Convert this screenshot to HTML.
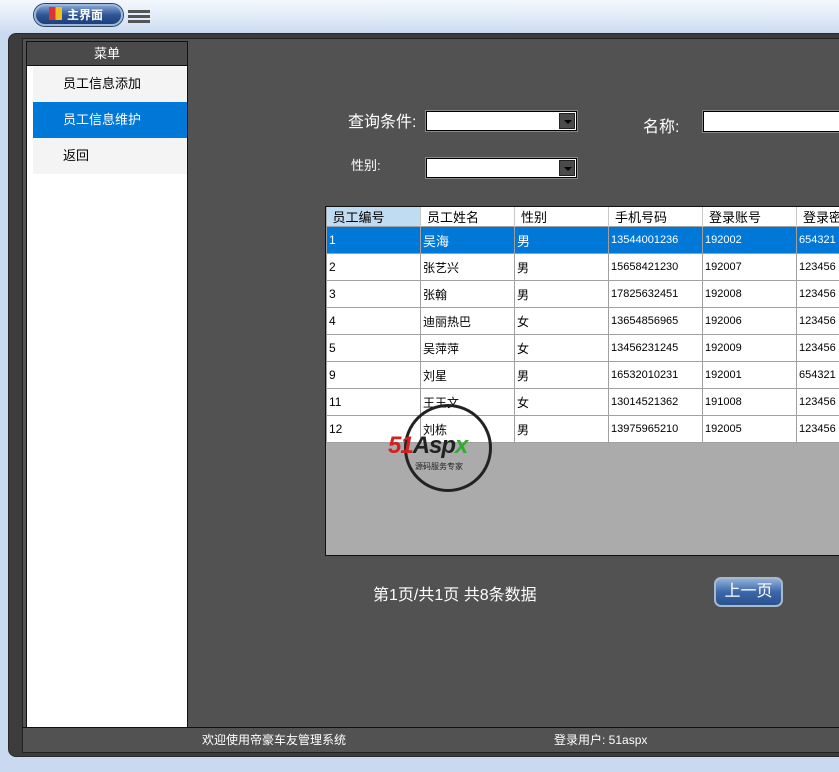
<!DOCTYPE html>
<html><head><meta charset="utf-8"><style>
*{margin:0;padding:0;box-sizing:border-box}
body{width:839px;height:772px;overflow:hidden;position:relative;background:#c9d9ef;font-family:"Liberation Sans","Noto Sans CJK SC","WenQuanYi Zen Hei",sans-serif;font-size:12px}
.abs{position:absolute}
.top{left:0;top:0;width:839px;height:34px;background:linear-gradient(#f4f8fd,#dde8f7 60%,#c9d9ef)}
.frame{left:8px;top:33px;width:840px;height:724px;background:#3c3c3c;border-radius:8px;border:1px solid #2a2a2a}
.inner{left:22px;top:38px;width:830px;height:715px;background:#525252;border:1px solid #222}
.side{left:26px;top:41px;width:162px;height:687px;background:#fff;border:1px solid #111}
.item{position:absolute;left:6px;width:154px;height:36px;line-height:36px;padding-left:30px;font-size:13px;background:#f4f4f4;color:#000}
.w{color:#fff}
.combo{background:#fff;border:1px solid #000;outline:1px solid #888;height:20px}
.combo i{position:absolute;right:1px;top:1px;width:16px;height:16px;background:#4a4a4a;border:1px solid #222}
.combo i:after{content:"";position:absolute;left:4px;top:6px;border:4px solid transparent;border-top:4px solid #000}
table{border-collapse:collapse;font-size:12px;table-layout:fixed}
td{border:1px solid #a0a0a0;height:27px;padding-left:2px;white-space:nowrap;overflow:hidden}
th{font-weight:normal;text-align:left;height:19px;padding-left:6px;border-right:1px solid #c8c8c8;font-size:13px;background:#fff}
.sel td{background:#0078d7;color:#fff}
.num{font-size:11px}
</style></head><body>
<div class="abs top"></div>
<div class="abs" style="left:34px;top:4px;width:89px;height:22px;border-radius:11px;background:linear-gradient(#7fa0cf,#2f5596 50%,#1d3f7a);border:2px solid #9bb7df;box-shadow:0 0 0 1px #345"></div>
<div class="abs" style="left:49px;top:7px;width:13px;height:13px;background:linear-gradient(90deg,#d33 50%,#f0c020 50%)"></div>
<div class="abs w" style="left:67px;top:6px;font-size:12px;font-weight:bold">主界面</div>
<div class="abs" style="left:128px;top:10px;width:22px;height:3px;background:#555;box-shadow:0 5px 0 #555,0 10px 0 #555"></div>
<div class="abs frame"></div>
<div class="abs inner"></div>
<div class="abs side">
 <div class="abs" style="left:0;top:0;width:160px;height:24px;background:#4a4a4a;color:#fff;text-align:center;line-height:24px;font-size:13px;border-bottom:1px solid #111">菜单</div>
 <div class="item" style="top:24px">员工信息添加</div>
 <div class="item" style="top:60px;background:#0078d7;color:#fff">员工信息维护</div>
 <div class="item" style="top:96px">返回</div>
</div>
<div class="abs w" style="left:348px;top:108px;font-size:16px">查询条件:</div>
<div class="abs combo" style="left:426px;top:111px;width:151px"><i></i></div>
<div class="abs w" style="left:643px;top:113px;font-size:16px">名称:</div>
<div class="abs combo" style="left:703px;top:111px;width:140px;height:21px"></div>
<div class="abs w" style="left:351px;top:155px;font-size:13px">性别:</div>
<div class="abs combo" style="left:426px;top:158px;width:151px"><i></i></div>
<div class="abs" style="left:325px;top:206px;width:520px;height:350px;background:#ababab;border:1px solid #111;overflow:hidden">
<table style="width:600px">
<colgroup><col style="width:94px"><col style="width:94px"><col style="width:94px"><col style="width:94px"><col style="width:94px"><col style="width:130px"></colgroup>
<tr><th style="background:#bfdcf3">员工编号</th><th>员工姓名</th><th>性别</th><th>手机号码</th><th>登录账号</th><th>登录密码</th></tr>
<tr class="sel"><td>1</td><td style="font-size:13px">吴海</td><td style="font-size:13px">男</td><td class="num">13544001236</td><td class="num">192002</td><td class="num">654321</td></tr>
<tr style="background:#fff"><td>2</td><td>张艺兴</td><td>男</td><td class="num">15658421230</td><td class="num">192007</td><td class="num">123456</td></tr>
<tr style="background:#fff"><td>3</td><td>张翰</td><td>男</td><td class="num">17825632451</td><td class="num">192008</td><td class="num">123456</td></tr>
<tr style="background:#fff"><td>4</td><td>迪丽热巴</td><td>女</td><td class="num">13654856965</td><td class="num">192006</td><td class="num">123456</td></tr>
<tr style="background:#fff"><td>5</td><td>吴萍萍</td><td>女</td><td class="num">13456231245</td><td class="num">192009</td><td class="num">123456</td></tr>
<tr style="background:#fff"><td>9</td><td>刘星</td><td>男</td><td class="num">16532010231</td><td class="num">192001</td><td class="num">654321</td></tr>
<tr style="background:#fff"><td>11</td><td>王王文</td><td>女</td><td class="num">13014521362</td><td class="num">191008</td><td class="num">123456</td></tr>
<tr style="background:#fff"><td>12</td><td>刘栋</td><td>男</td><td class="num">13975965210</td><td class="num">192005</td><td class="num">123456</td></tr>
</table></div>
<div class="abs" style="left:404px;top:404px;width:88px;height:88px;border:3px solid #222;border-radius:50%"></div>
<div class="abs" style="left:388px;top:432px;font-size:24px;font-weight:bold;font-style:italic;color:#d42020;letter-spacing:-1px">51<span style="color:#222">Asp</span><span style="color:#3a3">x</span></div>
<div class="abs" style="left:415px;top:461px;font-size:8px;color:#222">源码服务专家</div>
<div class="abs w" style="left:373px;top:581px;font-size:16px">第1页/共1页 共8条数据</div>
<div class="abs w" style="left:714px;top:577px;width:69px;height:30px;border-radius:7px;background:linear-gradient(#8fb0dc,#3d67a8 50%,#2a528f);border:2px solid #a9b9cc;text-align:center;line-height:26px;font-size:16px">上一页</div>
<div class="abs" style="left:22px;top:727px;width:830px;height:1px;background:#111"></div>
<div class="abs w" style="left:202px;top:731px;font-size:12px">欢迎使用帝豪车友管理系统</div>
<div class="abs w" style="left:554px;top:731px;font-size:12px">登录用户: 51aspx</div>
</body></html>
